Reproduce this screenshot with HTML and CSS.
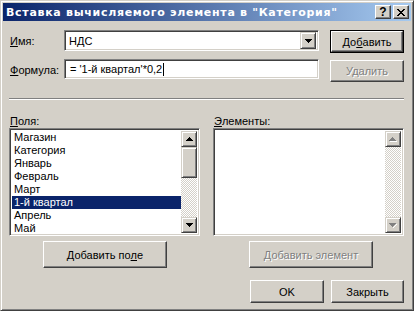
FILE: index.html
```html
<!DOCTYPE html>
<html>
<head>
<meta charset="utf-8">
<link rel="stylesheet" href="styles.css">
</head>
<body>
<div class="window">
  <div class="titlebar">
    <span class="title">Вставка вычисляемого элемента в "Категория"</span>
    <div class="caption-btns">
      <span class="cap-btn help">?</span>
      <span class="cap-btn close"><svg width="8" height="7" viewBox="0 0 8 7"><path d="M0 0h2v1H0zM6 0h2v1H6zM1 1h2v1H1zM5 1h2v1H5zM2 2h4v1H2zM3 3h2v1H3zM2 4h4v1H2zM1 5h2v1H1zM5 5h2v1H5zM0 6h2v1H0zM6 6h2v1H6z" fill="#000"/></svg></span>
    </div>
  </div>
  <div class="content">
    <div class="top-grid">
      <label class="lbl"><u>И</u>мя:</label>
      <div class="combo sunken">
        <span class="field-text">НДС</span>
        <span class="drop-btn"><svg width="7" height="4" viewBox="0 0 7 4"><path d="M0 0h7v1H0zM1 1h5v1H1zM2 2h3v1H2zM3 3h1v1H3z" fill="#000"/></svg></span>
      </div>
      <div class="btn default"><span class="btn-inner">До<u>б</u>авить</span></div>

      <label class="lbl"><u>Ф</u>ормула:</label>
      <div class="input sunken"><span class="field-text">= '1-й квартал'*0,2</span><span class="caret"></span></div>
      <div class="btn disabled small">Удалить</div>
    </div>

    <div class="separator"></div>

    <div class="lists">
      <div class="list-col">
        <div class="lbl list-lbl"><u>П</u>оля:</div>
        <div class="listbox sunken">
          <ul class="items">
            <li>Магазин</li>
            <li>Категория</li>
            <li>Январь</li>
            <li>Февраль</li>
            <li>Март</li>
            <li class="selected">1-й квартал</li>
            <li>Апрель</li>
            <li>Май</li>
          </ul>
          <div class="scrollbar">
            <span class="sb-btn"><svg width="7" height="4" viewBox="0 0 7 4"><path d="M3 0h1v1H3zM2 1h3v1H2zM1 2h5v1H1zM0 3h7v1H0z" fill="#000"/></svg></span>
            <span class="thumb"></span>
            <span class="track"></span>
            <span class="sb-btn"><svg width="7" height="4" viewBox="0 0 7 4"><path d="M0 0h7v1H0zM1 1h5v1H1zM2 2h3v1H2zM3 3h1v1H3z" fill="#000"/></svg></span>
          </div>
        </div>
        <div class="btn wide add-field">Добавить по<u>л</u>е</div>
      </div>
      <div class="list-col">
        <div class="lbl list-lbl"><u>Э</u>лементы:</div>
        <div class="listbox sunken">
          <ul class="items"></ul>
          <div class="scrollbar">
            <span class="sb-btn"><svg width="8" height="5" viewBox="0 0 8 5"><path d="M4 1h1v1H4zM5 2h1v1H5zM6 3h1v1H6zM1 4h7v1H1z" fill="#fff"/><path d="M3 0h1v1H3zM2 1h3v1H2zM1 2h5v1H1zM0 3h7v1H0z" fill="#808080"/></svg></span>
            <span class="track full"></span>
            <span class="sb-btn"><svg width="8" height="5" viewBox="0 0 8 5"><path d="M7 1h1v1H7zM6 2h1v1H6zM5 3h1v1H5zM4 4h1v1H4z" fill="#fff"/><path d="M0 0h7v1H0zM1 1h5v1H1zM2 2h3v1H2zM3 3h1v1H3z" fill="#808080"/></svg></span>
          </div>
        </div>
        <div class="btn wide disabled add-item">Добавить элемент</div>
      </div>
    </div>

    <div class="bottom-row">
      <div class="btn ok">OK</div>
      <div class="btn close-btn">Закрыть</div>
    </div>
  </div>
</div>
</body>
</html>
```
FILE: styles.css
```css
* { box-sizing: border-box; }
html, body { margin: 0; padding: 0; }
body {
  width: 414px;
  height: 311px;
  overflow: hidden;
  background: #d4d0c8;
  font: 11px "Liberation Sans", Arial, sans-serif;
  color: #000;
}
u { text-decoration: underline; text-underline-offset: 1px; }
ul { margin: 0; padding: 0; list-style: none; }

.window {
  width: 414px;
  height: 311px;
  background: #d4d0c8;
  border: 1px solid;
  border-color: #d4d0c8 #404040 #404040 #d4d0c8;
  box-shadow: inset 1px 1px #fff, inset -1px -1px #808080;
  padding: 2px;
  display: flex;
  flex-direction: column;
}

.titlebar {
  height: 18px;
  background: linear-gradient(to right, #0a246a, #a6caf0);
  display: flex;
  align-items: center;
  padding: 0 2px 0 3px;
}
.title {
  color: #fff;
  font: bold 11px "DejaVu Sans", sans-serif;
  white-space: nowrap;
  letter-spacing: 0.7px;
}
.caption-btns { margin-left: auto; display: flex; gap: 2px; }
.cap-btn {
  width: 16px;
  height: 14px;
  background: #d4d0c8;
  border: 1px solid;
  border-color: #fff #404040 #404040 #fff;
  box-shadow: inset -1px -1px #808080;
  display: flex;
  align-items: center;
  justify-content: center;
}
.help { font: bold 12px "Liberation Sans", sans-serif; line-height: 12px; }
.close svg { display: block; }

.content {
  flex: 1;
  padding: 9px 7px 0 6px;
  display: flex;
  flex-direction: column;
}

.top-grid {
  display: grid;
  grid-template-columns: 44px 255px 74px;
  grid-template-rows: 23px 23px;
  column-gap: 11px;
  row-gap: 6px;
}
.lbl { display: flex; align-items: center; padding-left: 1px; white-space: nowrap; }
.top-grid .lbl { padding-bottom: 2px; }

.sunken {
  background: #fff;
  border: 1px solid;
  border-color: #808080 #fff #fff #808080;
  box-shadow: inset 1px 1px #404040, inset -1px -1px #d4d0c8;
}
.combo {
  height: 21px;
  display: flex;
  align-items: center;
  padding: 2px;
}
.field-text { padding-left: 2px; white-space: nowrap; }
.combo .field-text { flex: 1; }
.drop-btn {
  width: 16px;
  height: 17px;
  background: #d4d0c8;
  border: 1px solid;
  border-color: #d4d0c8 #404040 #404040 #d4d0c8;
  box-shadow: inset 1px 1px #fff, inset -1px -1px #808080;
  display: flex;
  align-items: center;
  justify-content: center;
}
.drop-btn svg, .sb-btn svg { display: block; }

.input {
  height: 20px;
  display: flex;
  align-items: center;
  padding: 2px 2px 2px 3px;
}
.caret { width: 1px; height: 13px; background: #000; margin-left: 1px; }

.btn {
  background: #d4d0c8;
  border: 1px solid;
  border-color: #fff #404040 #404040 #fff;
  box-shadow: inset -1px -1px #808080, inset 1px 1px #d4d0c8;
  display: flex;
  align-items: center;
  justify-content: center;
  white-space: nowrap;
  height: 22px;
}
.btn.default {
  border: 1px solid #000;
  box-shadow: none;
  padding: 0;
  height: 23px;
}
.btn-inner {
  flex: 1;
  align-self: stretch;
  display: flex;
  align-items: center;
  justify-content: center;
  border: 1px solid;
  border-color: #fff #404040 #404040 #fff;
  box-shadow: inset -1px -1px #808080;
}
.btn.small { margin-top: 1px; }
.btn.disabled { color: #808080; text-shadow: 1px 1px #fff; }

.separator {
  margin-top: 16px;
  height: 2px;
  border-top: 1px solid #808080;
  border-bottom: 1px solid #fff;
}

.lists {
  margin-top: 14px;
  display: grid;
  grid-template-columns: 191px 191px;
  column-gap: 13px;
}
.list-col { display: flex; flex-direction: column; }
.list-lbl { height: 14px; }
.listbox {
  height: 108px;
  padding: 2px;
  display: flex;
}
.items { flex: 1; padding-top: 0; }
.items li { height: 13px; line-height: 13px; padding-left: 2px; white-space: nowrap; }
.items li.selected { background: #0a246a; color: #fff; }

.scrollbar { width: 16px; display: flex; flex-direction: column; }
.sb-btn {
  width: 16px;
  height: 16px;
  background: #d4d0c8;
  border: 1px solid;
  border-color: #d4d0c8 #404040 #404040 #d4d0c8;
  box-shadow: inset 1px 1px #fff, inset -1px -1px #808080;
  display: flex;
  align-items: center;
  justify-content: center;
}
.thumb {
  height: 31px;
  background: #d4d0c8;
  border: 1px solid;
  border-color: #d4d0c8 #404040 #404040 #d4d0c8;
  box-shadow: inset 1px 1px #fff, inset -1px -1px #808080;
}
.track {
  flex: 1;
  background: repeating-conic-gradient(#fff 0 25%, #d4d0c8 0 50%) 0 0 / 2px 2px;
}

.btn.wide { width: 124px; height: 27px; margin-top: 5px; }
.add-field { margin-left: 34px; }
.add-item { margin-left: 36px; width: 125px; }

.bottom-row {
  margin-top: 12px;
  display: flex;
  justify-content: flex-end;
  gap: 7px;
}
.ok { width: 74px; height: 23px; }
.close-btn { width: 73px; height: 23px; }
```
